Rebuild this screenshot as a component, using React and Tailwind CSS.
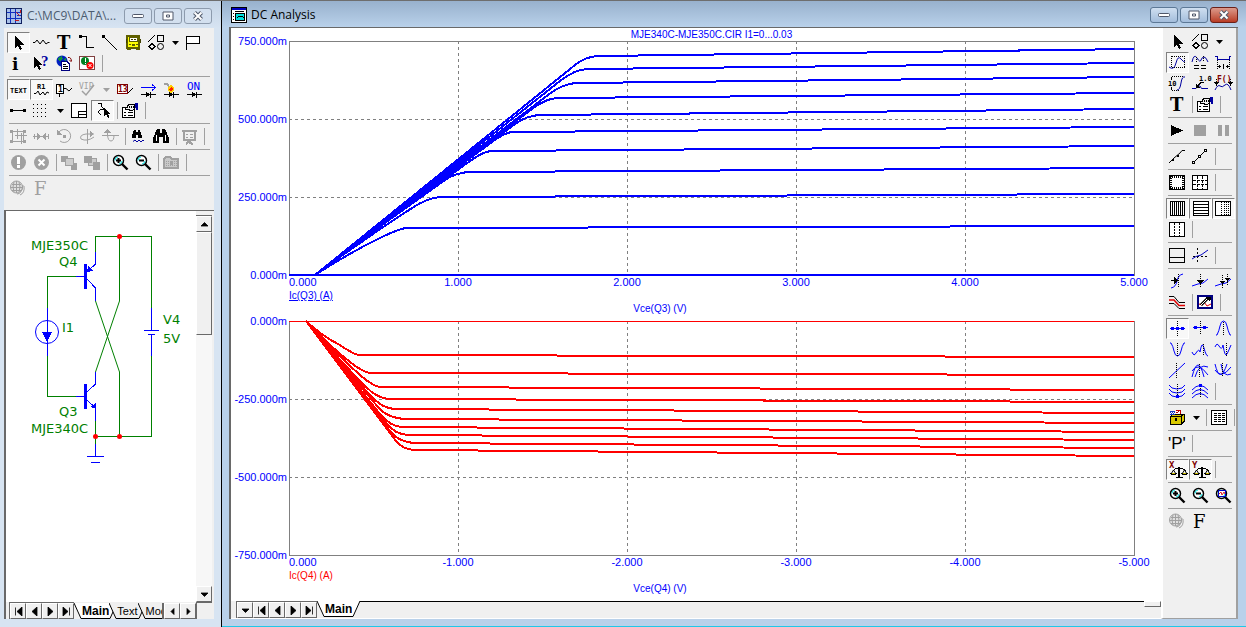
import React from 'react';
import clsx from 'clsx';

const GRAY = '#a0a0a0';
const BLUE = '#0000ff';
const NAVY = '#0000a0';
const MAROON = '#800000';
const SERIF = '"Liberation Serif", serif';
const SLAB = '"DejaVu Serif", serif';
const SANS = '"Liberation Sans", sans-serif';
const MONO = '"DejaVu Sans Mono", monospace';

const line = (d, stroke = '#000', extra = {}) => <path d={d} fill="none" stroke={stroke} {...extra} />;
const fill = (d, color = '#000') => <path d={d} fill={color} />;
const dots = (d, stroke = '#000') => line(d, stroke, { strokeDasharray: '1 1' });
const soft = { shapeRendering: 'auto' };

const glyph = (text, x, y, size, color = '#000', family = SANS, weight = 700) => (
  <text x={x} y={y} fontSize={size} fill={color} fontFamily={family} fontWeight={weight}>{text}</text>
);

const diode = (
  <>
    {line('M3 14.5H18M12.5 12V18')}
    {fill('M8 11.5V17.5L12 14.5Z')}
  </>
);

const zoomGlass = (sign) => (
  <>
    <circle cx="8.5" cy="7.5" r="5" fill="#fff" stroke="#000" strokeWidth="1.5" {...soft} />
    {line('M5 7.5A3.5 3.5 0 0 1 8 4M12 8A3.5 3.5 0 0 1 9 11', '#00e0e0', soft)}
    {line('M12 11L17.5 16.5', '#000', { strokeWidth: 2.4, ...soft })}
    {sign}
  </>
);

const scales = (
  <>
    {line('M12 7V17', '#000', { strokeWidth: 2 })}
    {line('M9 17.5H16M6 10.5L9 8.5H15L19 10.5')}
    {line('M6.5 10L4 14M6.5 10L9 14M17.5 10L15 14M17.5 10L20 14', '#000', soft)}
    {fill('M3 13H10L9 15H4ZM14 13H21L20 15H15Z')}
    {fill('M5 13H8V14H5ZM16 13H19V14H16Z', '#d0c000')}
  </>
);

const propsSheet = (
  <>
    <path d="M2.5 6.5H14.5V16.5H2.5Z" fill="#fff" stroke="#000" />
    {line('M4 11.5H6M8 11.5H13M4 14.5H6M8 14.5H13')}
    <path d="M5 8L9 3.5H14.5V8.5L11 9.5L8 8.5Z" fill="#f0f0f0" stroke="#000" />
    {dots('M7 6.5H14M9 5.5H14')}
    {fill('M15 2H18V9H16V7H15Z', NAVY)}
  </>
);

const icons = {
  select: fill('M7 3V15L10 12.5L12 17L14 16L12.2 12H16Z'),
  component: line('M2 9.5H4L6 7L9 11L12 7L15 11L17 9.5H18.5', '#000', soft),
  text: glyph('T', 3, 16, 18, '#000', SLAB),
  wire: <>{fill('M2 2H5V5H2Z')}{line('M4 3.5H9.5V14.5H17')}</>,
  diagonal: <>{fill('M2 2H5V5H2Z')}{line('M4 4L17 17')}</>,
  bus: (
    <>
      <path d="M4 3H16V15H4Z" fill="#ffff00" stroke="#606000" strokeWidth="2" />
      <path d="M6.5 4.5H14.5V8.5H6.5Z" fill="#fff" stroke="#606000" />
      {line('M8 6.5H10M11 6.5H13M3.5 6V10M17.5 6V10', '#404000')}
      {fill('M6 11H8V12H6ZM13 11H15V12H13ZM9 11H12V13H9ZM4 15H8V17H4ZM13 15H17V17H13Z', '#606000')}
    </>
  ),
  shapes: (
    <>
      {line('M2 9L9 2M11.5 2.5H17.5V8.5H11.5Z')}
      {line('M6 10.5L9 13.5L6 16.5L3 13.5Z')}
      <circle cx="14.5" cy="13.5" r="3" fill="none" stroke="#000" {...soft} />
    </>
  ),
  flag: <path d="M2.5 17V3.5H15.5V10.5H2.5" fill="#fff" stroke="#000" />,
  info: glyph('i', 4, 16, 17, '#000', SLAB),
  help: <>{fill('M3 2V14L6 11.5L8 16L10 15L8.2 11H11Z')}{glyph('?', 10, 12, 15, NAVY, SERIF)}</>,
  globeDoc: (
    <>
      <circle cx="8" cy="7" r="5.5" fill="#0020c0" {...soft} />
      {fill('M5 3L8 2L9 5L6 7L4 6ZM9 6L12 4V7Z', '#109040')}
      {line('M14 3.5Q17 3 17.5 7M15.5 6L17.5 8', MAROON, soft)}
      <path d="M7.5 7.5H13L15.5 10V16.5H7.5Z" fill="#fff" stroke="#000080" />
      {line('M9 10.5H12M9 12.5H14M9 14.5H14', '#000')}
    </>
  ),
  checks: (
    <>
      <path d="M2.5 2.5H17.5V15.5H2.5Z" fill="#fff" stroke="#804040" />
      <circle cx="8" cy="7" r="4" fill="#008020" {...soft} />
      {line('M8 4V8M8 9V10', '#fff')}
      <circle cx="13" cy="11.5" r="3.5" fill="#ff0000" {...soft} />
      {line('M11.5 10L14.5 13M14.5 10L11.5 13', '#fff', soft)}
    </>
  ),
  gridText: glyph('TEXT', 2, 13, 7, '#000', MONO),
  attrText: <>{glyph('R1', 6, 9, 7, '#000', MONO)}{line('M3 13.5H5L7 11L9 15L12 12L14 15L16 12L18 13', '#000', soft)}</>,
  nodeNumbers: (
    <>
      {line('M5.5 13V17')}
      <path d="M2.5 4.5H9.5V13.5H2.5Z" fill="#fff" stroke="#000" />
      {glyph('1', 4, 12, 8, '#000', MONO)}
      {line('M10 8.5H12L15 11L18 8', '#000', soft)}
    </>
  ),
  vip: <>{glyph('VIP', 2, 9, 8, GRAY, MONO, 400)}{line('M5 11L9 15L17 5', GRAY, { strokeWidth: 1.5, ...soft })}</>,
  pinNumbers: (
    <>
      <path d="M2.5 4.5H12.5V13.5H2.5Z" fill="#fff" stroke={MAROON} />
      {glyph('13', 3, 12, 8, MAROON, MONO)}
      {line('M13 13L18 8')}
    </>
  ),
  currents: <>{line('M3 7.5H17M14 4.5L17.5 7.5L14 10.5', BLUE)}{diode}</>,
  power: (
    <>
      {diode}
      {line('M3 3.5H5L8 6', GRAY, { strokeWidth: 2 })}
      {fill('M10 4L13 8V11L10 13L7 11V8Z', '#ffd000')}
      {fill('M10 7L12 9L10 12L8 9Z', '#ff2000')}
    </>
  ),
  conditions: <>{glyph('ON', 3, 10, 11, BLUE, MONO, 400)}{diode}</>,
  rubber: <>{line('M3 9.5H17')}{fill('M2 8H5V11H2ZM15 8H18V11H15Z')}</>,
  grid: line('M2 3.5H18M2 7.5H18M2 11.5H18M2 15.5H18', '#000', { strokeDasharray: '1 3' }),
  border: <><path d="M2.5 2.5H17.5V16.5H2.5Z" fill="#fff" stroke="#000" />{line('M9.5 16V10.5H17M10 13.5H17')}</>,
  crosshair: <>{line('M6 2.5H9V5L12 8H9L6 11L9 14')}{fill('M12 6V15L14 13L16 17L17.5 16L16 12.5H18Z')}</>,
  properties: propsSheet,
  group: (
    <>
      {line('M3 4.5H17M3 14.5H17M4.5 3V16M15.5 3V16M9.5 2V12M7 8.5H19M13.5 6V17', GRAY)}
      {fill('M2 3H5V6H2ZM15 3H18V6H15ZM2 13H5V16H2ZM15 13H18V16H15Z', GRAY)}
    </>
  ),
  flipX: <>{line('M2 9.5H18M3 7V12M17 7V12', GRAY)}{fill('M6 6L10 9.5L6 13ZM15 6L11 9.5L15 13Z', GRAY)}</>,
  rotate: <>{line('M5 5A6.5 6.5 0 1 1 6 14', GRAY, soft)}{fill('M3 3V8H8ZM9 8H12V11H9Z', GRAY)}</>,
  flipY: <>{line('M10.5 2V17M4 12Q2 8 9 7H17M4 12Q10 15 17 10', GRAY, soft)}{fill('M13 4L17 7L13 10Z', GRAY)}</>,
  flipZ: <>{line('M2 8.5H19M7.5 8V3M7.5 8Q8 14 11 14Q14 14 14 8', GRAY, soft)}{fill('M4 6L7.5 2L11 6Z', GRAY)}</>,
  find: (
    <>
      {fill('M6 3H8V5H10V3H12L14 9V11H10V8H8V11H4V9Z')}
      {line('M5 14.5L7 13L9 15L11 13L13 15L15 13L16 14', NAVY, soft)}
    </>
  ),
  findAll: (
    <>
      {fill('M6 2H9V6H11V2H14L18 11V16H12V10H8V16H2V11Z')}
      {line('M5.5 8V14M14.5 8V14', '#fff')}
    </>
  ),
  present: (
    <>
      {line('M3 4H18M5 5V13H16V5', GRAY, { strokeWidth: 2 })}
      {line('M10.5 14V17M7 17.5L10 14L14 17.5', GRAY, { strokeWidth: 2 })}
      {line('M7 7.5H9M11 7.5H14M7 10.5H9M11 10.5H14', GRAY)}
    </>
  ),
  warn: <><circle cx="10.5" cy="9.5" r="7.5" fill={GRAY} {...soft} />{fill('M9 4H12V11H9ZM9 12H12V15H9Z', '#fff')}</>,
  cancel: (
    <>
      <circle cx="10.5" cy="9.5" r="7.5" fill={GRAY} {...soft} />
      {line('M7.5 6.5L13.5 12.5M13.5 6.5L7.5 12.5', '#fff', { strokeWidth: 2, ...soft })}
    </>
  ),
  toFront: <>{fill('M2 3H9V9H2ZM12 10H18V17H12Z', GRAY)}<path d="M6.5 5.5H14.5V12.5H6.5Z" fill="#ccc" stroke={GRAY} /></>,
  toBack: <><path d="M6.5 5.5H14.5V12.5H6.5Z" fill="#ccc" stroke={GRAY} />{fill('M2 3H10V10H2ZM11 9H18V17H11Z', GRAY)}</>,
  zoomIn: zoomGlass(line('M6 7.5H11M8.5 5V10', '#000', { strokeWidth: 2, ...soft })),
  zoomOut: zoomGlass(line('M6 7.5H11', '#000', { strokeWidth: 2, ...soft })),
  zoomFit: zoomGlass(<>{line('M5.5 4.5H12.5V10.5H5.5Z', '#0000c0')}{line('M6 8L8 6L9 9L11 6L12 8', '#e02020', soft)}</>),
  folder: (
    <>
      <path d="M3 6L5 4H9L11 6H17V15H3Z" fill="#c8c8c8" stroke={GRAY} strokeWidth="2" />
      {dots('M5 8.5H16M5 10.5H16M5 12.5H16', GRAY)}
      {fill('M9 8H12V12H9Z', GRAY)}
    </>
  ),
  globe: (
    <>
      <circle cx="8.5" cy="8" r="6" fill="#e0e0e0" stroke={GRAY} {...soft} />
      {line('M4 5.5H13M3 8.5H14M4 11.5H13', GRAY)}
      {line('M8.5 2V14M6 3Q4 8 6 13M11 3Q13 8 11 13M12 16Q17 14 16 7M9 15Q14 15 15 6', GRAY, soft)}
    </>
  ),
  fontGray: glyph('F', 3, 16, 18, GRAY, SLAB, 400),
  font: glyph('F', 3, 16, 18, '#000', SLAB, 400),

  // analysis window
  scaleMode: (
    <>
      {dots('M4.5 3.5H17.5V14.5H4.5V3')}
      {line('M2 14Q7 18 9 10T14 6T18 8', NAVY, soft)}
    </>
  ),
  cursorMode: (
    <>
      {line('M2 9Q4 0 7 5T11 7T14 4T18 9', NAVY, soft)}
      {dots('M6.5 4V9M13.5 3V9')}
      {line('M4 12.5H9M11 12.5H16M4 15.5H9M11 15.5H16')}
    </>
  ),
  horizTag: (
    <>
      {line('M2 3.5H4V6.5H16V3.5H18', NAVY)}
      {dots('M4.5 7V17M16.5 7V17')}
      {line('M5 13.5H8M13 13.5H16M10.5 11V16')}
      {fill('M5 13.5L7 11V16ZM16 13.5L14 11V16Z')}
    </>
  ),
  vertTag: (
    <>
      {line('M10 16Q13 16 14 9T18 3', NAVY, soft)}
      {dots('M5 2.5H16M5 16.5H12')}
      {line('M4.5 3V6M4.5 13V16')}
      {glyph('10', 1, 12, 7, '#000', MONO)}
    </>
  ),
  pointTag: (
    <>
      {line('M2 14.5H6L7.5 12H10L11.5 14.5H18', NAVY, soft)}
      {glyph('1.0', 9, 7, 7, '#000', MONO)}
      {line('M14 8.5H11L8 11.5')}
      {fill('M6 10V14H10Z')}
    </>
  ),
  perfTag: (
    <>
      {line('M2 16Q5 10 7 12T12 11T18 16', NAVY, soft)}
      {dots('M3.5 5V12M17.5 5V12')}
      {glyph('F()', 4, 8, 8, MAROON, MONO)}
      {fill('M1 8H6L3.5 12ZM15 8H20L17.5 12Z')}
    </>
  ),
  run: fill('M4 4L16 9.5L4 15Z'),
  stop: fill('M4 4H16V15H4Z', GRAY),
  pause: fill('M5 4H9V15H5ZM12 4H16V15H12Z', GRAY),
  dataPoints: <>{line('M2 16L7 11L13 6L15 3.5H18', '#000', soft)}{fill('M5 12H7V14H5ZM10 8H12V10H10Z')}</>,
  tokens: <>{line('M4 15L16 3')}<path d="M2.5 14.5H4.5V16.5H2.5ZM8.5 8.5H10.5V10.5H8.5ZM14.5 2.5H16.5V4.5H14.5Z" fill="#fff" stroke="#000" /></>,
  ruler: (
    <>
      <path d="M2.5 2.5H17.5V16.5H2.5Z" fill="#fff" stroke="#000" />
      {line('M3 4H17M3 15H17', '#000', { strokeDasharray: '1 1', strokeWidth: 2 })}
      {line('M4 3V16M16 3V16', '#000', { strokeDasharray: '1 1', strokeWidth: 2 })}
    </>
  ),
  plusGrid: (
    <>
      <path d="M2.5 2.5H17.5V16.5H2.5Z" fill="#fff" stroke="#000" />
      {line('M3 7.5H17M3 11.5H17M7.5 3V16M12.5 3V16', '#000', { strokeDasharray: '3 1' })}
    </>
  ),
  vGrid: <><path d="M3.5 2.5H17.5V16.5H3.5Z" fill="#fff" stroke="#000" />{line('M5.5 3V16M7.5 3V16M9.5 3V16M11.5 3V16M13.5 3V16M15.5 3V16')}</>,
  hGrid: <><path d="M3.5 2.5H18.5V16.5H3.5Z" fill="#fff" stroke="#000" />{line('M4 5.5H18M4 8.5H18M4 11.5H18M4 14.5H18')}</>,
  minorGrid: (
    <>
      <path d="M2.5 2.5H17.5V16.5H2.5Z" fill="#fff" stroke="#000" />
      {dots('M8.5 3V16M11.5 3V16M13.5 3V16M15.5 3V16')}
    </>
  ),
  minorLog: (
    <>
      <path d="M2.5 2.5H17.5V16.5H2.5Z" fill="#fff" stroke="#000" />
      {line('M7.5 3V16M12.5 3V16', '#000', { strokeDasharray: '2 1' })}
    </>
  ),
  baseline: <><path d="M2.5 2.5H17.5V16.5H2.5Z" fill="#f0f0f0" stroke="#000" />{line('M3 11.5H17')}</>,
  horizCursor: <>{line('M7.5 2V17M3 10.5H17', '#000', { strokeDasharray: '2 2' })}{line('M2 13L6 10.5L11 9L18 4', '#0000c0', soft)}</>,
  leftCursor: (
    <>
      {line('M4 16Q9 15 10 9T16 2', BLUE, soft)}
      {dots('M11.5 2V16')}
      {line('M4 8.5H9')}
      {fill('M7 5L11 8.5L7 12Z')}
    </>
  ),
  nextPoint: <>{line('M2 14L8 12L13 11L18 7', BLUE, soft)}{dots('M10.5 2V16')}{fill('M7 8H14L10.5 12Z')}</>,
  bothPoint: <>{line('M2 14L8 12L13 11L18 7', BLUE, soft)}{dots('M9.5 3V16M14.5 2V14')}{fill('M7 9H12L9.5 13ZM12 6H17L14.5 10Z')}</>,
  trackers: (
    <>
      {line('M2 3.5H7L12 9.5H18M2 10.5H7L12 15.5H18', '#000', soft)}
      {line('M2 7H7L12 12.5H18', '#e00000', { strokeWidth: 1.5, ...soft })}
    </>
  ),
  labelBranch: (
    <>
      <path d="M3 3H17V15H3Z" fill="#fff" stroke="#000080" strokeWidth="2" />
      {line('M4 11L7 12L9 9L12 13L16 11', '#e00000', soft)}
      {line('M6 12L13 5', '#000', { strokeWidth: 3, ...soft })}
      {line('M6 12L13 5', '#fff', soft)}
      {fill('M10 4H16V6L14 8Z')}
    </>
  ),
  nextBoth: <>{line('M3 9.5H18', BLUE)}{dots('M10.5 2V17')}{fill('M4 8H7V11H4ZM9 8H12V11H9ZM14 8H17V11H14Z', BLUE)}</>,
  nextOne: <>{line('M3 8.5H18', BLUE)}{dots('M10.5 2V16')}{fill('M4 7H7V10H4ZM13 7H16V10H13Z', BLUE)}</>,
  peak: <>{line('M3 16H4Q6 12 7 7T10.5 2Q13 2 14 7T17 16H18', BLUE, soft)}{dots('M10.5 3V16')}</>,
  valley: <>{line('M3 3H4Q6 6 7 11T10.5 16Q13 16 14 11T17 3H18', BLUE, soft)}{dots('M10.5 3V16')}</>,
  high: <>{line('M2 12Q4 17 6 13Q9 8 10 12Q12 0 14 8T18 16', BLUE, soft)}{dots('M13.5 4V16')}</>,
  low: <>{line('M2 7Q4 2 6 6Q9 11 10 5Q12 18 14 14T18 5', BLUE, soft)}{dots('M13.5 3V16')}</>,
  inflection: <>{line('M2 17L18 2', BLUE, soft)}{dots('M9.5 2V17')}</>,
  top: <>{line('M2 16Q8 -8 14 16M5 16Q9 2 18 6M2 10Q8 0 18 14', BLUE, soft)}{dots('M9.5 3V16')}</>,
  bottom: <>{line('M2 3Q7 24 14 3M8 3Q10 17 18 13M2 9Q8 19 18 6', BLUE, soft)}{dots('M9.5 2V16')}</>,
  globalLow: (
    <>
      {line('M2 3Q4 7 10 7Q16 7 18 3M2 7Q4 11 10 11Q16 11 18 7M2 11Q4 15 10 15Q16 15 18 11', BLUE, soft)}
      {dots('M10.5 2V16')}
      {fill('M9 13H12V16H9Z', BLUE)}
    </>
  ),
  globalHigh: (
    <>
      {line('M2 8Q10 -1 18 8M2 12Q10 3 18 12M2 16Q10 7 18 16', BLUE, soft)}
      {dots('M10.5 2V16')}
      {fill('M9 2H12V5H9Z', BLUE)}
    </>
  ),
  clipboardBox: (
    <>
      <path d="M3.5 8.5L6 6H17.5V13L14 16.5H3.5Z" fill="#d8c800" stroke="#000" />
      {line('M4 8.5H14L17 6M14.5 9V16')}
      {fill('M3 3H8V7H3Z', '#2040c0')}
      {dots('M4 4.5H8M3 5.5H8', '#fff')}
      {fill('M9 2H13V6H9Z', '#fff')}
      {line('M9 2.5H13V6M9.5 5L12 3', '#c00000')}
      {fill('M8 10H10V13H8Z')}
    </>
  ),
  numeric: (
    <>
      <path d="M2.5 2.5H17.5V16.5H2.5Z" fill="#fff" stroke="#000" />
      {line('M5 5.5H16M5 7.5H16M5 9.5H16M5 11.5H16M5 13.5H16', '#000', { strokeDasharray: '3 1' })}
    </>
  ),
  pLabel: glyph("'P'", 1, 15, 17, '#000', SANS, 400),
  scaleX: <>{glyph('X', 2, 8, 9, MAROON, MONO)}{scales}</>,
  scaleY: <>{glyph('Y', 2, 8, 9, MAROON, MONO)}{scales}</>,
};

// "|" separator, "v" drop arrow, "V" disabled drop arrow, "*" marks a pressed button
const editorTools = [
  ['*select component text wire diagonal bus shapes v flag', 'info help globeDoc checks |'],
  ['*gridText *attrText nodeNumbers vip V pinNumbers currents power conditions', 'rubber grid v border *crosshair | properties |'],
  ['group flipX rotate flipY flipZ | find findAll | present |'],
  ['warn cancel | toFront toBack | zoomIn zoomOut | folder |'],
  ['globe fontGray'],
];

const plotTools = [
  ['select shapes v', '*scaleMode cursorMode horizTag', 'vertTag pointTag perfTag', 'text | properties |'],
  ['run stop pause'],
  ['dataPoints tokens |'],
  ['ruler plusGrid |'],
  ['*vGrid *hGrid *minorGrid', 'minorLog |'],
  ['baseline horizCursor |'],
  ['leftCursor nextPoint bothPoint', 'trackers | labelBranch |'],
  ['*nextBoth nextOne peak', 'valley high low', 'inflection top bottom', 'globalLow globalHigh |'],
  ['clipboardBox v | numeric |'],
  ['pLabel |'],
  ['*scaleX *scaleY |'],
  ['zoomIn zoomOut zoomFit'],
  ['globe font'],
];

function Tool({ code }) {
  if (code === '|') {
    return <span className="ml-[3px] mr-px h-[17px] w-px bg-[#a0a0a0]" />;
  }
  if (code === 'v' || code === 'V') {
    return (
      <button type="button" aria-label="More" className="flex h-[21px] w-[15px] items-center justify-center">
        <svg width="7" height="4" viewBox="0 0 7 4"><path d="M0 0H7L3.5 4Z" fill={code === 'v' ? '#000' : GRAY} /></svg>
      </button>
    );
  }
  const pressed = code.startsWith('*');
  const name = code.replace('*', '');
  return (
    <button
      type="button"
      aria-label={name}
      aria-pressed={pressed}
      className={clsx(
        'h-[21px] w-[23px] border',
        pressed ? 'border-t-[#808080] border-l-[#808080] border-r-white border-b-white bg-[#f8f8f8]' : 'border-transparent'
      )}
    >
      <svg width="21" height="19" viewBox="0 0 21 19" shapeRendering="crispEdges" className="block overflow-visible">{icons[name]}</svg>
    </button>
  );
}

function Toolbar({ groups }) {
  return (
    <div role="toolbar" className="flex flex-col">
      {groups.map((rows, i) => (
        <div key={i} className={clsx('flex flex-col', i > 0 && 'mt-0.5')}>
          {rows.map((row) => (
            <div key={row} className="flex items-center">
              {row.split(' ').map((code, j) => <Tool key={j} code={code} />)}
            </div>
          ))}
          {i < groups.length - 1 && <div className="mr-1 ml-0.5 mt-0.5 h-px bg-[#a0a0a0]" />}
        </div>
      ))}
    </div>
  );
}

function WindowButtons({ active }) {
  const base = clsx(
    'flex h-4 w-7 items-center justify-center rounded-[3px] border',
    active ? 'border-[#5c7896] bg-linear-to-b from-[#cfdff0] to-[#a3bddb]' : 'border-[#8d9bad] bg-[#d3e0ef]'
  );
  return (
    <div className="flex gap-0.5">
      <button type="button" aria-label="Minimize" className={base}>
        <svg width="12" height="6"><rect x="0.5" y="1.5" width="11" height="3" rx="1" fill="#fff" stroke="#50586a" /></svg>
      </button>
      <button type="button" aria-label="Maximize" className={base}>
        <svg width="12" height="10"><path d="M1 1H11V9H1Z M4.5 4H7.5V6H4.5Z" fill="#fff" stroke="#50586a" /></svg>
      </button>
      <button
        type="button"
        aria-label="Close"
        className={clsx(base, active && 'border-[#6b2018] from-[#dc9a8c] to-[#b83a22]')}
      >
        <svg width="12" height="10" viewBox="0 0 12 10">
          <path d="M2.5 1.5L9.5 8.5M9.5 1.5L2.5 8.5" stroke="#50586a" strokeWidth="4" />
          <path d="M2.5 1.5L9.5 8.5M9.5 1.5L2.5 8.5" stroke="#fff" strokeWidth="2" />
        </svg>
      </button>
    </div>
  );
}

const navPaths = {
  first: 'M3.5 0.5V8.5M10 0L5 4.5L10 9Z',
  prev: 'M9 0L4 4.5L9 9Z',
  next: 'M4 0L9 4.5L4 9Z',
  last: 'M3 0L8 4.5L3 9ZM9.5 0.5V8.5',
  left: 'M8 1.5L5 4.5L8 7.5Z',
  right: 'M5 1.5L8 4.5L5 7.5Z',
  up: 'M3 6L6.5 2.5L10 6Z',
  down: 'M3 3L6.5 6.5L10 3Z',
};

function NavButton({ kind }) {
  return (
    <button
      type="button"
      aria-label={kind}
      className="flex h-4 w-4 shrink-0 items-center justify-center border border-t-white border-l-white border-r-[#696969] border-b-[#696969] bg-[#f0f0f0]"
    >
      <svg width="13" height="9" viewBox="0 0 13 9" className="shrink-0"><path d={navPaths[kind]} fill="#000" stroke="#000" strokeWidth="0.8" /></svg>
    </button>
  );
}

function NavStrip({ kinds }) {
  return (
    <div className="flex h-[17px] shrink-0 border-t border-l border-[#696969]">
      {kinds.map((kind) => <NavButton key={kind} kind={kind} />)}
    </div>
  );
}

function SheetTab({ label, active }) {
  const back = active ? '#fff' : '#f0f0f0';
  return (
    <button
      type="button"
      className={clsx('-mr-2 flex h-4 shrink-0 items-stretch leading-4 text-black', active ? 'text-[12px] font-bold' : 'text-[11px]')}
    >
      <svg width="8" height="16"><path d="M0 0H8V15.5H7Z" fill={back} /><path d="M0 0L7 15.5H8" fill="none" stroke="#000" /></svg>
      <span className={clsx('border-b border-black', active ? 'bg-white' : 'bg-[#f0f0f0]')}>{label}</span>
      <svg width="8" height="16"><path d="M8 0H0V15.5H1Z" fill={back} /><path d="M8 0L1 15.5H0" fill="none" stroke="#000" /></svg>
    </button>
  );
}

function Schematic() {
  return (
    <svg width="190" height="260" viewBox="6 210 190 260" shapeRendering="crispEdges" className="block">
      <g fill="none" stroke="#008000">
        <path d="M95.5 251V235.5H151.5V307M119.5 235V300M47.5 307V275.5H76M47.5 355V395.5H76M151.5 355V435.5H95.5V420M119.5 435V371M95.5 435V443" />
        <path d="M95.5 300L119.5 371M119.5 300L95.5 371" shapeRendering="auto" />
      </g>
      <g fill="none" stroke="#0000ff">
        <path d="M95.5 251V263L87 271M87 278L95.5 287V300M76 275.5H85M95.5 371V383L87 391M87 399L95.5 407V420M76 395.5H85" />
        <path d="M47.5 307V355M151.5 307V329M144 329.5H159M148 333.5H155M151.5 333V355M95.5 443V455M87 455.5H104M91 461.5H100" />
        <circle cx="47" cy="331" r="11.5" shapeRendering="auto" />
      </g>
      <g fill="#0000ff">
        <path d="M84 263H87V288H84ZM84 383H87V408H84ZM42 331H52L47 341ZM87 271L88 265L93 270ZM96 408L90 406L96 402Z" />
      </g>
      <g fill="#ff0000" shapeRendering="auto">
        <circle cx="119.5" cy="235.5" r="2.5" />
        <circle cx="95.5" cy="435.5" r="2.5" />
        <circle cx="119.5" cy="435.5" r="2.5" />
      </g>
      <g fill="#008000" fontFamily='"DejaVu Sans", sans-serif' fontSize="13">
        <text x="31" y="249">MJE350C</text>
        <text x="59" y="265">Q4</text>
        <text x="62" y="331">I1</text>
        <text x="163" y="323">V4</text>
        <text x="163" y="342">5V</text>
        <text x="59" y="415">Q3</text>
        <text x="31" y="432">MJE340C</text>
      </g>
    </svg>
  );
}

// each curve: [end of the steep part, start of the flat part, level at the right edge]
const collectorQ3 = {
  origin: [26, 234],
  curves: [
    [[91, 197], [118, 187], 185],
    [[123, 167], [153, 156], 153],
    [[156, 139], [183, 131], 127],
    [[181, 120], [203, 110], 105],
    [[203, 101], [224, 91], 86],
    [[226, 83], [253, 74], 68],
    [[243, 68], [269, 57], 52],
    [[259, 54], [288, 42], 36],
    [[271, 40], [299, 28], 22],
    [[286, 24], [311, 15], 8],
  ],
};

const collectorQ4 = {
  origin: [17, 0],
  curves: [
    [[49, 23], [70, 34], 36],
    [[61, 41], [82, 52], 54],
    [[71, 54], [92, 66], 69],
    [[76, 65], [101, 78], 81],
    [[81, 74], [106, 88], 92],
    [[89, 86], [118, 98], 102],
    [[91, 93], [114, 106], 111],
    [[96, 101], [120, 114], 119],
    [[101, 110], [128, 122], 127],
    [[107, 120], [128, 129], 135],
  ],
};

function curvePath({ origin: [ox, oy], curves }, [[x1, y1], [x2, y2], end]) {
  // all curves leave the axis close to the outermost one, then bend off
  const [[ex, ey]] = curves[curves.length - 1];
  const mx = (ox + x1) / 2;
  const outer = oy + ((ey - oy) * (mx - ox)) / (ex - ox);
  const my = (oy + y1) / 2 + (outer - (oy + y1) / 2) * 0.35;
  const cx = Math.min(x1 + ((y2 - y1) * (x1 - mx)) / (y1 - my), x2 - 4);
  return `M${ox} ${oy}Q${mx} ${my} ${x1} ${y1}Q${cx} ${y2} ${x2} ${y2}L845 ${end}`;
}

function PlotPane({ data, color, zeroAt, yLabels, xLabels, trace, traceClass, xTitle }) {
  return (
    <section className="flex min-h-0 flex-1 flex-col">
      <div className="flex min-h-0 flex-1">
        <div className="flex w-[58px] flex-col items-end justify-between pr-0.5 text-[11px]">
          {yLabels.map((label) => <span key={label} className="flex h-0 items-center">{label}</span>)}
        </div>
        <div className="min-h-0 min-w-0 flex-1">
          <svg viewBox="0 0 845 234" preserveAspectRatio="none" shapeRendering="crispEdges" className="block h-full w-full overflow-visible">
            <path
              d="M0 78H845M0 156H845M169 0V234M338 0V234M507 0V234M676 0V234"
              stroke="#808080"
              strokeDasharray="3 3"
              vectorEffect="non-scaling-stroke"
            />
            <path d="M0 0H845V234H0Z" fill="none" stroke="#808080" vectorEffect="non-scaling-stroke" />
            <path d={`M0 ${zeroAt}H845`} stroke={color} strokeWidth={zeroAt ? 2 : 1} vectorEffect="non-scaling-stroke" />
            {data.curves.map((curve) => (
              <path
                key={curve[2]}
                d={curvePath(data, curve)}
                fill="none"
                stroke={color}
                strokeWidth="2"
                vectorEffect="non-scaling-stroke"
              />
            ))}
          </svg>
        </div>
      </div>
      <div className="ml-[58px] flex h-[14px] justify-between text-[11px] leading-[14px]">
        {xLabels.map((label, i) => (
          <span key={label} className={clsx('flex w-0', i > 0 && 'justify-center')}>{label}</span>
        ))}
      </div>
      <div className={clsx('ml-[58px] h-[13px] text-[10px] leading-[13px]', traceClass)}>{trace}</div>
      <div className="mr-[103px] ml-[58px] h-[19px] text-center text-[10px] leading-[13px]">{xTitle}</div>
    </section>
  );
}

function EditorWindow() {
  return (
    <aside className="flex w-[222px] shrink-0 flex-col border-r border-black bg-[#d7e4f2]">
      <header className="flex h-[27px] shrink-0 items-center justify-between bg-linear-to-b from-[#c3d3e5] to-[#d7e4f2] pr-[9px] pl-1.5 pt-0.5">
        <div className="flex items-center gap-[5px]">
          <svg width="16" height="16" shapeRendering="crispEdges">
            <path d="M0.5 0.5H15.5V15.5H0.5Z" fill="#a8c0e8" stroke="#102060" />
            <path d="M1 4.5H15M4.5 1V15M9.5 1V15M1 10.5H15M11 7.5H15" stroke="#1030c0" />
            <path d="M10 4L14 8M14 2V5M9 12H13" stroke="#c02020" />
          </svg>
          <h1 className="text-[12px] leading-4 text-[#4c5c70]">C:\MC9\DATA\...</h1>
        </div>
        <WindowButtons />
      </header>
      <div className="mr-[7px] mb-2 ml-1 flex min-h-0 flex-1 flex-col bg-[#f0f0f0]">
        <div className="h-[183px] shrink-0 border-b border-[#696969] pt-1 pl-[3px]">
          <Toolbar groups={editorTools} />
        </div>
        <div className="mr-0.5 flex min-h-0 flex-1 flex-col border-l-2 border-l-[#696969]">
          <div className="flex min-h-0 flex-1">
            <div className="min-w-0 flex-1 overflow-hidden bg-white">
              <Schematic />
            </div>
            <div className="flex w-4 shrink-0 flex-col border-t-4 border-[#f0f0f0] bg-[#f7f7f7]">
              <div className="h-px shrink-0 bg-[#696969]" />
              <NavButton kind="up" />
              <div className="h-[103px] border border-t-white border-l-white border-r-[#696969] border-b-[#696969] bg-[#f0f0f0]" />
              <div className="flex-1" />
              <NavButton kind="down" />
            </div>
          </div>
          <div className="flex h-[17px] shrink-0 items-end pl-[3px]">
            <NavStrip kinds={['first', 'prev', 'next', 'last']} />
            <div className="flex min-w-0 flex-1 overflow-hidden border-r-2 border-r-[#696969]">
              <SheetTab label="Main" active />
              <SheetTab label="Text" />
              <SheetTab label="Models" />
            </div>
            <NavButton kind="left" />
            <NavButton kind="right" />
            <div className="h-full w-4 shrink-0 border-t border-l border-[#696969]" />
          </div>
        </div>
      </div>
    </aside>
  );
}

function AnalysisWindow() {
  return (
    <main className="flex min-w-0 flex-1 flex-col border-b border-[#20c8e8] bg-[#b9d1ea]">
      <header className="flex h-[26px] shrink-0 items-center justify-between bg-linear-to-b from-[#98b1cd] to-[#b9d1ea] pr-2 pl-[9px] pt-0.5">
        <div className="flex items-center gap-1">
          <svg width="16" height="16" shapeRendering="crispEdges">
            <path d="M0.5 0.5H15.5V15.5H0.5Z" fill="#fff" stroke="#000" />
            <path d="M1 1H15V3H1Z" fill="#0000c0" />
            <path d="M4.5 6.5H13.5V13.5H4.5Z" fill="#00e0e0" stroke="#000" />
            <path d="M6 11L8 9H11L13 11M2 6.5H3M2 9.5H3M2 12.5H3M4 4.5H13" fill="none" stroke="#000" />
          </svg>
          <h2 className="text-[12px] leading-4 text-black">DC Analysis</h2>
        </div>
        <WindowButtons active />
      </header>
      <div className="mr-2 mb-[7px] ml-[7px] flex min-h-0 flex-1 border-t border-l-2 border-t-[#696969] border-l-[#696969] bg-[#f0f0f0]">
        <div className="flex min-w-0 flex-1 flex-col">
          <div className="flex min-h-0 flex-1 flex-col bg-white pr-[27px] text-[#0000ff]">
            <div className="ml-[58px] h-[13px] shrink-0 text-center text-[10px] leading-[13px]">MJE340C-MJE350C.CIR I1=0...0.03</div>
            <PlotPane
              data={collectorQ3}
              color="#0000ff"
              zeroAt={234}
              yLabels={['750.000m', '500.000m', '250.000m', '0.000m']}
              xLabels={['0.000', '1.000', '2.000', '3.000', '4.000', '5.000']}
              trace="Ic(Q3) (A)"
              traceClass="underline"
              xTitle="Vce(Q3) (V)"
            />
            <PlotPane
              data={collectorQ4}
              color="#ff0000"
              zeroAt={0}
              yLabels={['0.000m', '-250.000m', '-500.000m', '-750.000m']}
              xLabels={['0.000', '-1.000', '-2.000', '-3.000', '-4.000', '-5.000']}
              trace="Ic(Q4) (A)"
              traceClass="text-[#ff0000]"
              xTitle="Vce(Q4) (V)"
            />
          </div>
          <div className="flex h-[18px] shrink-0 items-start border-b border-white pl-[5px]">
            <NavStrip kinds={['down', 'first', 'prev', 'next', 'last']} />
            <SheetTab label="Main" active />
            <div className="ml-2 h-px flex-1 bg-black" />
            <div className="h-1.5 w-[17px] border border-t-white border-l-white border-r-[#696969] border-b-[#696969]" />
          </div>
        </div>
        <div className="w-[77px] shrink-0 border-r-2 border-b border-l-2 border-r-[#a0a0a0] border-b-[#a0a0a0] border-l-white pt-[3px] pl-[3px]">
          <Toolbar groups={plotTools} />
        </div>
      </div>
    </main>
  );
}

function App() {
  return (
    <div className="flex h-screen min-h-[560px] border-t border-[#6e6e6e] font-['Liberation_Sans',sans-serif] [&_h1]:font-['Open_Sans',sans-serif] [&_h2]:font-['Open_Sans',sans-serif]">
      <EditorWindow />
      <AnalysisWindow />
    </div>
  );
}

export default App;
